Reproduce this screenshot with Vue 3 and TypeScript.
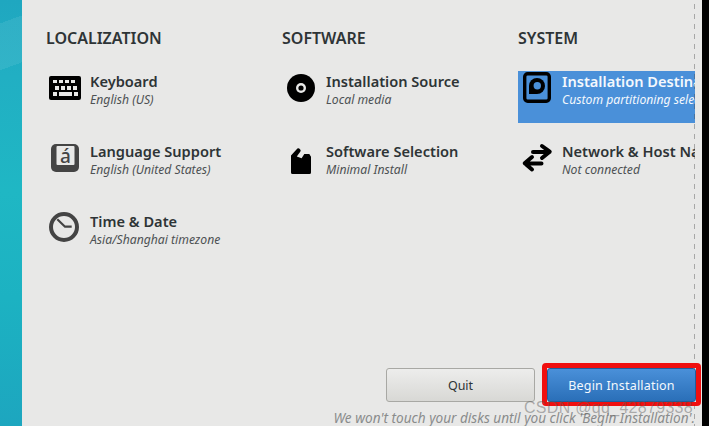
<script setup lang="ts">
interface Spoke {
  title: string
  status: string
  icon: string
  selected?: boolean
}
interface Category {
  name: string
  spokes: Spoke[]
}
const categories: Category[] = [
  {
    name: 'LOCALIZATION',
    spokes: [
      { title: 'Keyboard', status: 'English (US)', icon: 'keyboard' },
      { title: 'Language Support', status: 'English (United States)', icon: 'language' },
      { title: 'Time & Date', status: 'Asia/Shanghai timezone', icon: 'clock' },
    ],
  },
  {
    name: 'SOFTWARE',
    spokes: [
      { title: 'Installation Source', status: 'Local media', icon: 'disc' },
      { title: 'Software Selection', status: 'Minimal Install', icon: 'package' },
    ],
  },
  {
    name: 'SYSTEM',
    spokes: [
      { title: 'Installation Destination', status: 'Custom partitioning selected', icon: 'drive', selected: true },
      { title: 'Network & Host Name', status: 'Not connected', icon: 'network' },
    ],
  },
]
</script>

<template>
  <div class="screen">
    <aside class="rail"></aside>
    <main class="panel">
      <div class="columns">
        <section v-for="cat in categories" :key="cat.name" class="column">
          <h2 class="heading">{{ cat.name }}</h2>
          <div class="spokes">
            <div v-for="s in cat.spokes" :key="s.title" class="spoke" :class="{ selected: s.selected }">
              <svg class="icon" width="40" height="40" viewBox="0 0 40 40">
                <template v-if="s.icon === 'keyboard'">
                  <rect x="3" y="5" width="32" height="24" rx="2" fill="#000" />
                  <g fill="#e8e8e7">
                    <rect x="7" y="9" width="4" height="3" /><rect x="13" y="9" width="4" height="3" /><rect x="19" y="9" width="4" height="3" /><rect x="25" y="9" width="4" height="3" />
                    <rect x="9" y="15" width="4" height="4" /><rect x="15" y="15" width="4" height="4" /><rect x="21" y="15" width="4" height="4" /><rect x="27" y="15" width="4" height="4" />
                    <rect x="7" y="21" width="4" height="4" /><rect x="13" y="21" width="13" height="4" /><rect x="28" y="21" width="4" height="4" />
                  </g>
                </template>
                <template v-else-if="s.icon === 'language'">
                  <rect x="5" y="3" width="28" height="28" rx="5" fill="#444" />
                  <rect x="10.5" y="5" width="18" height="19" rx="1" fill="#e8e8e7" />
                  <text x="19.5" y="22" text-anchor="middle" class="glyph">á</text>
                </template>
                <template v-else-if="s.icon === 'clock'">
                  <circle cx="18" cy="16" r="13" fill="none" stroke="#444" stroke-width="4" />
                  <path d="M11.3 8.3 L19 15.7 H25.7" fill="none" stroke="#444" stroke-width="2.2" />
                </template>
                <template v-else-if="s.icon === 'disc'">
                  <circle cx="19" cy="17" r="14" fill="#000" />
                  <circle cx="19" cy="17" r="5" fill="#e8e8e7" />
                  <circle cx="19" cy="17" r="2.6" fill="#000" />
                </template>
                <template v-else-if="s.icon === 'package'">
                  <path d="M9 14.5 L15.4 7.6 Q16.4 6.8 17.2 7.6 L18.4 8.8 Q19 9.6 18.4 10.4 L14.8 15.6 L19.6 17.2 L22.3 13 H27.3 L29 15.7 V31.5 Q29 33 27.5 33 H10.5 Q9 33 9 31.5 Z" fill="#000" />
                </template>
                <template v-else-if="s.icon === 'drive'">
                  <rect x="6.7" y="2.7" width="24.6" height="27.6" rx="3" fill="none" stroke="#000" stroke-width="3.4" />
                  <path d="M11 23 V15 A8 8 0 1 1 19 23 Z" fill="#000" />
                  <circle cx="19.3" cy="14.7" r="3.7" fill="#4a90d9" />
                </template>
                <template v-else>
                  <g fill="none" stroke="#000" stroke-width="4" stroke-linecap="round" stroke-linejoin="round">
                    <path d="M15 11 H31.5 M24 5 L31.7 10.7 L24 17" />
                    <path d="M7 22.5 H23.5 M14 16 L6.7 22.3 L14 28.5" />
                  </g>
                </template>
              </svg>
              <div class="labels">
                <div class="title">{{ s.title }}</div>
                <div class="status">{{ s.status }}</div>
              </div>
            </div>
          </div>
        </section>
      </div>
      <div class="divider"></div>
      <footer class="actions">
        <button class="btn quit">Quit</button>
        <div class="begin-wrap">
          <button class="btn begin">Begin Installation</button>
        </div>
      </footer>
      <p class="note">We won't touch your disks until you click 'Begin Installation'.</p>
      <span class="watermark">CSDN @qq_42879338</span>
    </main>
  </div>
</template>

<style>
html, body { margin: 0; background: #000; }
</style>

<style scoped>
.screen {
  display: flex;
  width: 702px;
  height: 426px;
  overflow: hidden;
  font-family: "Noto Sans", "Open Sans", sans-serif;
}
.rail {
  width: 22px;
  flex: none;
  background:
    linear-gradient(160deg, rgba(255, 255, 255, 0) 0 22px, rgba(255, 255, 255, 0.08) 22px 66px, rgba(255, 255, 255, 0) 66px),
    linear-gradient(180deg, #1fa7c0 0, #21afc3 18%, #1fb7c4 45%, #1cb2c2 70%, #1da6bf 100%);
}
.panel {
  position: relative;
  flex: 1;
  background: #e8e8e7;
  overflow: hidden;
}
.columns {
  display: flex;
  width: 673px;
  padding: 28px 0 0 24px;
  box-sizing: border-box;
  overflow: hidden;
}
.column {
  width: 236px;
  flex: none;
}
.heading {
  margin: 0 0 23px;
  font-size: 16px;
  line-height: 20px;
  font-weight: 600;
  color: #2e3436;
}
.spokes {
  display: flex;
  flex-direction: column;
  gap: 18px;
}
.spoke {
  display: flex;
  height: 52px;
  gap: 1px;
  white-space: nowrap;
  overflow: hidden;
}
.spoke.selected {
  background: #4a90d9;
  color: #fff;
}
.icon { flex: none; width: 40px; height: 40px; margin-right: 3px; }
.glyph {
  font: 500 19px "Noto Sans", sans-serif;
  fill: #444;
}
.title {
  font-size: 14.6px;
  line-height: 20px;
  font-weight: 600;
  color: #2e3436;
}
.status {
  margin-top: 2px;
  font-size: 12.2px;
  line-height: 14px;
  font-style: italic;
  color: #4d5153;
}
.selected .title, .selected .status { color: #f4f8fd; }
.divider {
  position: absolute;
  left: 672px;
  top: 0;
  bottom: 0;
  width: 1px;
  background: repeating-linear-gradient(180deg, transparent 0 4px, rgba(70, 70, 70, 0.4) 4px 9px, transparent 9px 10px);
}
.actions {
  position: absolute;
  right: 1px;
  top: 363px;
  display: flex;
  align-items: flex-start;
  gap: 7px;
}
.btn {
  height: 34px;
  border-radius: 3px;
  font: 12.5px "Noto Sans", sans-serif;
  box-sizing: border-box;
}
.quit {
  width: 149px;
  margin-top: 5px;
  border: 1px solid #a8a8a4;
  background: linear-gradient(#ededec, #d8d8d5);
  color: #2e3436;
}
.begin-wrap {
  border: 5px solid #f00f0f;
  border-bottom-width: 4px;
  border-radius: 4px;
  display: flex;
}
.begin {
  width: 149px;
  border: 1px solid #1f5d9c;
  background: linear-gradient(#4a90d9, #2a6fb8);
  color: #f4f8fd;
  letter-spacing: 0.2px;
}
.note {
  position: absolute;
  right: 7px;
  top: 409px;
  margin: 0;
  font-size: 13.6px;
  line-height: 17px;
  font-style: italic;
  color: #8a8c8c;
  white-space: nowrap;
}
.watermark {
  position: absolute;
  left: 502px;
  top: 399px;
  font: 16px "Liberation Sans", sans-serif;
  color: rgba(90, 90, 90, 0.45);
  white-space: nowrap;
  letter-spacing: 0.3px;
}
</style>
